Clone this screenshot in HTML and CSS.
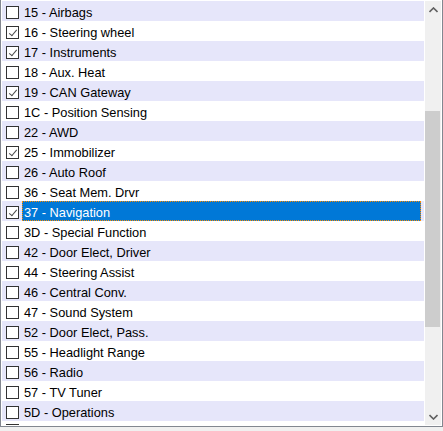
FILE: index.html
```html
<!DOCTYPE html>
<html>
<head>
<meta charset="utf-8">
<link rel="stylesheet" href="styles.css">
</head>
<body>
<div class="listbox">
  <div class="items">
    <div class="row"><span class="cb"></span><span class="label">15 - Airbags</span></div>
    <div class="row"><span class="cb on"></span><span class="label">16 - Steering wheel</span></div>
    <div class="row"><span class="cb on"></span><span class="label">17 - Instruments</span></div>
    <div class="row"><span class="cb"></span><span class="label">18 - Aux. Heat</span></div>
    <div class="row"><span class="cb on"></span><span class="label">19 - CAN Gateway</span></div>
    <div class="row"><span class="cb"></span><span class="label">1C - Position Sensing</span></div>
    <div class="row"><span class="cb"></span><span class="label">22 - AWD</span></div>
    <div class="row"><span class="cb on"></span><span class="label">25 - Immobilizer</span></div>
    <div class="row"><span class="cb"></span><span class="label">26 - Auto Roof</span></div>
    <div class="row"><span class="cb"></span><span class="label">36 - Seat Mem. Drvr</span></div>
    <div class="row selected"><span class="cb on"></span><span class="label">37 - Navigation</span></div>
    <div class="row"><span class="cb"></span><span class="label">3D - Special Function</span></div>
    <div class="row"><span class="cb"></span><span class="label">42 - Door Elect, Driver</span></div>
    <div class="row"><span class="cb"></span><span class="label">44 - Steering Assist</span></div>
    <div class="row"><span class="cb"></span><span class="label">46 - Central Conv.</span></div>
    <div class="row"><span class="cb"></span><span class="label">47 - Sound System</span></div>
    <div class="row"><span class="cb"></span><span class="label">52 - Door Elect, Pass.</span></div>
    <div class="row"><span class="cb"></span><span class="label">55 - Headlight Range</span></div>
    <div class="row"><span class="cb"></span><span class="label">56 - Radio</span></div>
    <div class="row"><span class="cb"></span><span class="label">57 - TV Tuner</span></div>
    <div class="row"><span class="cb"></span><span class="label">5D - Operations</span></div>
    <div class="row partial"><span class="cb"></span></div>
  </div>
  <div class="scrollbar">
    <div class="arrow up"><svg width="9" height="6" viewBox="0 0 9 6"><path d="M0.5 5 L4.5 1 L8.5 5" fill="none" stroke="#606060" stroke-width="1.6"/></svg></div>
    <div class="track">
      <div class="thumb"></div>
    </div>
    <div class="arrow down"><svg width="9" height="6" viewBox="0 0 9 6"><path d="M0.5 1 L4.5 5 L8.5 1" fill="none" stroke="#606060" stroke-width="1.6"/></svg></div>
  </div>
</div>
</body>
</html>
```
FILE: styles.css
```css
html, body {
  margin: 0;
  padding: 0;
  background: #f0f0f0;
}
body {
  width: 443px;
  height: 431px;
  overflow: hidden;
}
.listbox {
  box-sizing: border-box;
  margin-top: -1px;
  width: 443px;
  height: 428px;
  border: 1px solid #828790;
  padding: 1px;
  background: #ffffff;
  display: flex;
  gap: 1px;
}
.items {
  width: 422px;
  height: 424px;
  overflow: hidden;
  flex: none;
}
.row {
  height: 20px;
  display: flex;
  align-items: flex-start;
  font-family: "Liberation Sans", Arial, sans-serif;
  font-size: 12.8px;
  color: #000;
  background: #ffffff;
}
.row:nth-child(odd) {
  background: #e6e6fa;
}
.cb {
  box-sizing: border-box;
  width: 13px;
  height: 13px;
  margin-top: 5px;
  margin-left: 4px;
  margin-right: 3px;
  border: 1px solid #333333;
  background: #ffffff;
  flex: none;
  position: relative;
}
.partial .cb {
  margin-top: 3px;
}
.cb.on::after {
  content: "";
  position: absolute;
  left: 4px;
  top: 1px;
  width: 3px;
  height: 7px;
  border-right: 1.3px solid #4a4a4a;
  border-bottom: 1.3px solid #4a4a4a;
  transform: rotate(40deg);
  transform-origin: center;
}
.label {
  height: 20px;
  line-height: 23px;
  padding-left: 2px;
  flex: 1;
  margin-right: 3px;
  box-sizing: border-box;
  white-space: nowrap;
}
.selected .label {
  background: #0078d7;
  color: #ffffff;
  outline: 1px dotted #ff8c00;
  outline-offset: -1px;
}
.scrollbar {
  width: 16px;
  height: 424px;
  background: #f0f0f0;
  display: flex;
  flex-direction: column;
  flex: none;
}
.arrow {
  height: 17px;
  display: flex;
  align-items: center;
  justify-content: center;
  flex: none;
}
.track {
  flex: 1;
  padding-top: 93px;
}
.thumb {
  width: 15px;
  height: 216px;
  background: #cdcdcd;
}
```
